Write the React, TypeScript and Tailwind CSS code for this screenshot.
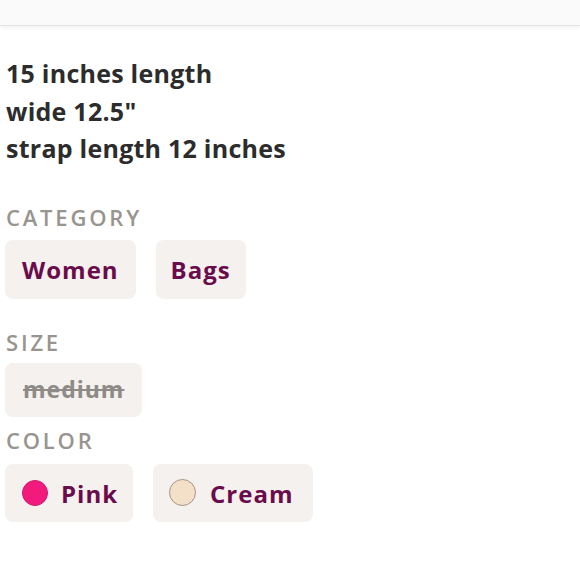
const chip = "flex items-center rounded-lg bg-[#f4f1ee]";
const label = "px-[1px] text-[22px] font-semibold leading-[30px] tracking-[2.8px] text-[#98948f]";

export default function App() {
  return (
    <div className="min-h-[580px] bg-white font-['Open_Sans',sans-serif]">
      <div className="h-[26px] border-b border-[#e3e3e3] bg-[#fafafa] shadow-[0_2px_4px_rgba(0,0,0,0.05)]" />

      <div className="px-[6px] pt-[29px] text-[25px] font-bold leading-[37.5px] tracking-[0.25px] text-[#2c2c2c]">
        <p>15 inches length</p>
        <p>wide 12.5"</p>
        <p>strap length 12 inches</p>
      </div>

      <div className="px-[5px]">
        <h3 className={`mt-[34px] ${label}`}>CATEGORY</h3>
        <div className="mt-[8px] flex gap-[20px]">
          <div className={`${chip} h-[59px] px-[17px] pt-[2px] text-[24px] font-bold tracking-[1px] text-[#6a0b4b]`}>Women</div>
          <div className={`${chip} h-[59px] px-[15px] pt-[2px] text-[24px] font-bold tracking-[1px] text-[#6a0b4b]`}>Bags</div>
        </div>

        <h3 className={`mt-[28px] ${label}`}>SIZE</h3>
        <div className="mt-[6px] flex">
          <div className={`${chip} h-[54px] px-[18px] text-[23px] font-bold tracking-[1px] text-[#8e8a86] line-through`}>
            medium
          </div>
        </div>

        <h3 className={`mt-[8px] ${label}`}>COLOR</h3>
        <div className="mt-[9px] flex gap-[20px]">
          <div className={`${chip} h-[58px] gap-[13px] pl-[17px] pr-[15px] text-[24px] font-bold tracking-[1px] text-[#6a0b4b]`}>
            <span className="h-[26px] w-[26px] rounded-full border border-[#d0186f] bg-[#f21a7c]" />
            <span className="pt-[2px]">Pink</span>
          </div>
          <div className={`${chip} h-[58px] gap-[14px] pl-[16px] pr-[19px] text-[24px] font-bold tracking-[1px] text-[#6a0b4b]`}>
            <span className="h-[27px] w-[27px] rounded-full border border-[#a39585] bg-[#f4dfc8]" />
            <span className="pt-[2px]">Cream</span>
          </div>
        </div>
      </div>
    </div>
  );
}
